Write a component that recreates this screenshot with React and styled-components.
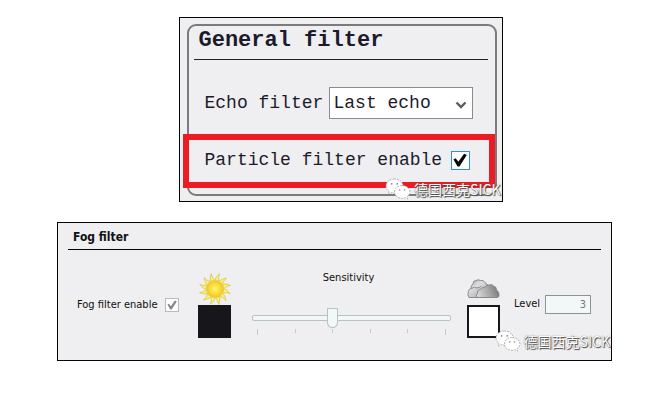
import React from 'react';
import styled, { createGlobalStyle } from 'styled-components';

const colors = {
  panel: '#efeef0',
  ink: '#1c1b2b',
  line: '#050505',
  frame: '#7b7b7b',
  highlight: '#eb1c24',
  groove: '#b5c3c6',
  glaze: '#f2f7f8',
};

const RAYS = [0, 30, 60, 90, 120, 150, 180, 210, 240, 270, 300, 330];
const TICKS = [1, 2, 3, 4, 5, 6];

const SunIcon = () => (
  <svg width="34" height="32" viewBox="-17 -16 34 32" aria-hidden="true">
    <defs>
      <radialGradient id="sun">
        <stop offset="0" stopColor="#fff27a" />
        <stop offset="0.6" stopColor="#fbdc38" />
        <stop offset="1" stopColor="#efc327" />
      </radialGradient>
    </defs>
    {RAYS.map(angle => (
      <path
        key={angle}
        d="M-2.2 -8.5 Q-1.8 -12 1.2 -15.8 Q0.6 -12 2.2 -8.5 Z"
        transform={`rotate(${angle + 12})`}
        fill="#fdf07c"
        stroke="#d9cb55"
        strokeWidth="0.8"
      />
    ))}
    <circle r="8.6" fill="url(#sun)" stroke="#f1d047" strokeWidth="0.6" />
  </svg>
);

const CloudIcon = () => (
  <svg width="33" height="20" viewBox="0 0 33 20" aria-hidden="true">
    <defs>
      <linearGradient id="cloudBack" x1="0" y1="0" x2="0.8" y2="1">
        <stop offset="0" stopColor="#999" />
        <stop offset="0.4" stopColor="#ddd" />
        <stop offset="1" stopColor="#aaa" />
      </linearGradient>
      <linearGradient id="cloudFront" x1="0" y1="0.6" x2="1" y2="0.4">
        <stop offset="0" stopColor="#d8d8d8" />
        <stop offset="0.5" stopColor="#aaa" />
        <stop offset="1" stopColor="#777" />
      </linearGradient>
    </defs>
    <g stroke="#858585" strokeWidth="0.9" strokeLinejoin="round">
      <path
        d="M2 18.5 Q0 16 1.5 12.5 Q1.5 10 4 9.5 Q3.5 6.5 6 5 Q6 1.5 9 1.5 Q11 0 13.5 1.5 Q17 .8 18 3.5 Q21 4.5 20.5 8 L20 18.5 Z"
        fill="url(#cloudBack)"
      />
      <path d="M4 9.5 Q8 7.5 10 9 Q13 9 14 7" fill="none" />
      <path
        d="M10 18.5 Q8.5 16 10.5 14 Q9.5 11.5 13 10.5 Q15 8 17.5 8.5 Q19 5.5 22 6 Q25 4.5 26.5 7 Q29.5 7.5 29.5 11 Q32.5 13 32 16.5 Q32 18.5 30 18.5 Z"
        fill="url(#cloudFront)"
      />
    </g>
  </svg>
);

const ChatIcon = () => (
  <svg width="26" height="22" viewBox="0 0 26 22" aria-hidden="true">
    <g fill="#fff" stroke="#999" strokeWidth="0.7" strokeDasharray="2 1">
      <path d="M9.5 1 C4.5 1 1 4 1 8 C1 10.5 2.2 12.3 4 13.5 L3.2 16 L6.3 14.5 Q8 15 10 14.9 C15 14.7 18 11.8 18 8 C18 4 14.5 1 9.5 1 Z" />
      <path d="M17 7.5 C12.5 7.5 9.5 10.5 9.5 14 C9.5 17.7 12.8 20.3 17 20.3 Q18.7 20.3 20.2 19.7 L22.6 21 L22 18.7 C23.9 17.5 25 15.9 25 14 C25 10.4 21.5 7.5 17 7.5 Z" />
    </g>
    <g fill="#888">
      <circle cx="6.7" cy="5.8" r="0.9" />
      <circle cx="12.2" cy="5.8" r="0.9" />
      <circle cx="14.7" cy="12" r="0.8" />
      <circle cx="19.5" cy="12" r="0.8" />
    </g>
  </svg>
);

const Watermark = () => (
  <Mark>
    <ChatIcon />
    <span>德国西克SICK</span>
  </Mark>
);

const GeneralFilter = () => (
  <GeneralPanel>
    <Group>
      <GroupTitle>General filter</GroupTitle>
      <EchoRow>
        <label htmlFor="echo">Echo filter</label>
        <SelectBox>
          <Select id="echo" defaultValue="last">
            <option value="last">Last echo</option>
          </Select>
          <Chevron width="12" height="8" viewBox="0 0 12 8" aria-hidden="true">
            <path d="M1.5 1.5 L6 6 L10.5 1.5" fill="none" stroke="#5c5c5c" strokeWidth="2.4" />
          </Chevron>
        </SelectBox>
      </EchoRow>
      <HighlightRow>
        <label htmlFor="particle">Particle filter enable</label>
        <Checkbox id="particle" type="checkbox" defaultChecked $size={19} $edge="#2f93cc" $mark="#050505" />
      </HighlightRow>
    </Group>
    <Watermark />
  </GeneralPanel>
);

const FogFilter = () => (
  <FogPanel>
    <FogTitle>Fog filter</FogTitle>
    <FogBody>
      <EnableField>
        <label htmlFor="fog">Fog filter enable</label>
        <Checkbox id="fog" type="checkbox" defaultChecked disabled $size={14} $edge="#b9b9b9" $mark="#868686" />
      </EnableField>
      <Swatch $fill="#17161a">
        <SunIcon />
      </Swatch>
      <SliderField>
        <label htmlFor="sensitivity">Sensitivity</label>
        <Slider id="sensitivity" type="range" min="1" max="6" defaultValue="3" disabled />
        <Ticks>
          {TICKS.map(tick => (
            <Tick key={tick} $tall={tick === 1 || tick === 6} />
          ))}
        </Ticks>
      </SliderField>
      <Swatch $fill="#fff" $gap={6}>
        <CloudIcon />
      </Swatch>
      <LevelField>
        <label htmlFor="level">Level</label>
        <LevelInput id="level" type="text" defaultValue="3" disabled />
      </LevelField>
    </FogBody>
    <Watermark />
  </FogPanel>
);

const App = () => (
  <Page>
    <GlobalStyle />
    <GeneralFilter />
    <FogFilter />
  </Page>
);

const GlobalStyle = createGlobalStyle`
  *,
  *::after {
    box-sizing: border-box;
  }

  body {
    margin: 0;
    background: #fff;
  }
`;

const Page = styled.main`
  display: flex;
  flex-direction: column;
  gap: 20px;
  padding: 17px 56px 40px 57px;
`;

const Panel = styled.section`
  position: relative;
  background: ${colors.panel};
  border: 1px solid ${colors.line};
`;

const GeneralPanel = styled(Panel)`
  align-self: center;
  width: 324px;
  margin-left: 12px;
  padding: 6px 5px 5px 7px;
  font: 18px/24px 'Liberation Mono', monospace;
  color: ${colors.ink};
`;

const Group = styled.div`
  border: 2px solid ${colors.frame};
  border-radius: 9px;
  padding: 0 0 6px;
`;

const GroupTitle = styled.h2`
  margin: 0 7px 0 5px;
  padding: 2px 5px 5px;
  border-bottom: 1px solid #222;
  font-size: 22px;
  line-height: 26px;
  font-weight: bold;
`;

const EchoRow = styled.div`
  display: flex;
  align-items: center;
  justify-content: space-between;
  padding: 27px 22px 15px 16px;
`;

const SelectBox = styled.div`
  position: relative;
`;

const Select = styled.select`
  appearance: none;
  display: block;
  width: 144px;
  height: 32px;
  padding: 0 4px;
  border: 1px solid #8c8c8c;
  border-radius: 0;
  background: #fff;
  color: inherit;
  font: inherit;
`;

const Chevron = styled.svg`
  position: absolute;
  right: 6px;
  top: 14px;
  pointer-events: none;
`;

const HighlightRow = styled.div`
  display: flex;
  align-items: center;
  justify-content: space-between;
  margin: 0 0 0 -6px;
  padding: 8px 19px 10px 16px;
  border: 6px solid ${colors.highlight};
`;

const Checkbox = styled.input`
  appearance: none;
  flex: none;
  display: grid;
  place-items: center;
  width: ${({ $size }) => $size}px;
  height: ${({ $size }) => $size}px;
  margin: 0;
  border: 1px solid ${({ $edge }) => $edge};
  background: #fff;

  &:checked::after {
    content: '';
    width: 80%;
    height: 80%;
    background: ${({ $mark }) => $mark};
    clip-path: polygon(2% 46%, 18% 38%, 38% 62%, 80% 4%, 100% 14%, 46% 98%, 32% 98%);
  }
`;

const Mark = styled.div`
  position: absolute;
  right: 1px;
  bottom: 1px;
  display: flex;
  align-items: center;
  gap: 3px;
  font: 14px/20px 'Noto Sans CJK SC', sans-serif;
  color: #fff;
  text-shadow: 1px 1px 1px #444, 0 0 1px #555;
  pointer-events: none;
`;

const FogPanel = styled(Panel)`
  padding: 4px 10px 20px;
  font: 11px/16px 'DejaVu Sans Condensed', 'Noto Sans', sans-serif;
  color: #111;

  ${Mark} {
    bottom: 8px;
  }
`;

const FogTitle = styled.h2`
  margin: 0;
  padding: 2px 5px 4px;
  border-bottom: 1px solid ${colors.line};
  font-size: 12px;
  line-height: 16px;
  font-weight: bold;
`;

const FogBody = styled.div`
  display: grid;
  grid-template-columns: 121px 33px 1fr 33px 91px;
  padding: 20px 10px 0 9px;
`;

const EnableField = styled.div`
  display: flex;
  align-items: center;
  justify-content: space-between;
  width: 102px;
  height: 70px;
  white-space: nowrap;
`;

const Swatch = styled.div`
  display: flex;
  flex-direction: column;
  align-items: center;
  justify-content: flex-end;
  gap: ${({ $gap = 0 }) => $gap}px;
  width: 33px;
  height: 68px;

  svg {
    flex: none;
  }

  &::after {
    content: '';
    flex: none;
    width: 33px;
    height: 33px;
    border: 2px solid #17161a;
    background: ${({ $fill }) => $fill};
  }
`;

const SliderField = styled.div`
  display: flex;
  flex-direction: column;
  align-items: center;
  padding: 0 16px 0 21px;

  label {
    padding-right: 6px;
  }
`;

const Slider = styled.input`
  appearance: none;
  width: 100%;
  height: 20px;
  margin: 22px 0 0;
  background: transparent;

  &::-webkit-slider-runnable-track {
    height: 6px;
    border: 1px solid ${colors.groove};
    border-radius: 2px;
    background: ${colors.glaze};
  }

  &::-webkit-slider-thumb {
    appearance: none;
    width: 11px;
    height: 20px;
    margin-top: -8px;
    border: 1px solid ${colors.groove};
    border-radius: 1px 1px 6px 6px;
    background: ${colors.glaze};
  }
`;

const Ticks = styled.div`
  display: flex;
  justify-content: space-between;
  width: 100%;
  padding: 1px 5px 0;
`;

const Tick = styled.span`
  width: 1px;
  height: ${({ $tall }) => ($tall ? 6 : 4)}px;
  background: #c2c8cb;
`;

const LevelField = styled.div`
  display: flex;
  align-items: center;
  justify-content: space-between;
  height: 68px;
  margin-left: 14px;
`;

const LevelInput = styled.input`
  width: 46px;
  height: 19px;
  padding: 0 4px;
  border: 1px solid #8d9396;
  background: ${colors.glaze};
  color: #777;
  font: inherit;
  text-align: right;
`;

export default App;
